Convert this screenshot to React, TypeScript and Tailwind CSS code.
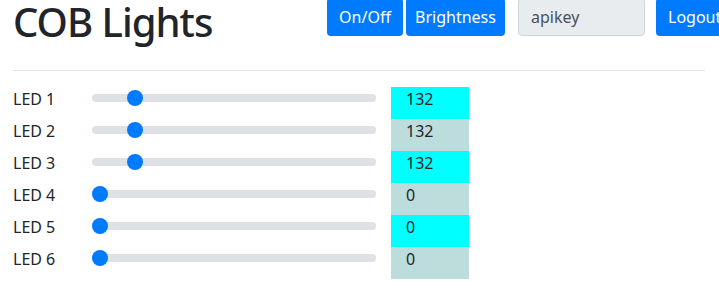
import React from 'react';

const leds = [
  { name: 'LED 1', value: 132 },
  { name: 'LED 2', value: 132 },
  { name: 'LED 3', value: 132 },
  { name: 'LED 4', value: 0 },
  { name: 'LED 5', value: 0 },
  { name: 'LED 6', value: 0 },
];

const TRACK_W = 284;
const THUMB_W = 16;
const MAX = 1023;

const Slider: React.FC<{ value: number }> = ({ value }) => (
  <div className="relative h-2 rounded-full bg-[#dee2e6]" style={{ width: TRACK_W }}>
    <div
      className="absolute top-1/2 h-4 w-4 -translate-y-1/2 rounded-full bg-[#007bff]"
      style={{ left: (value / MAX) * (TRACK_W - THUMB_W) }}
    />
  </div>
);

const App: React.FC = () => {
  return (
    <div className="h-[282px] w-[719px] overflow-hidden bg-white pl-[13px] font-['Noto_Sans',sans-serif] text-[#212529]">
      {/* Header */}
      <div className="-mt-[2px] flex items-start">
        <h1 className="w-[314px] shrink-0 whitespace-nowrap text-[40px] font-medium leading-[48px] tracking-[-1px]">
          COB Lights
        </h1>
        <button className="h-[38px] w-[76px] shrink-0 rounded bg-[#007bff] text-base text-white">On/Off</button>
        <button className="ml-[3px] h-[38px] w-[99px] shrink-0 rounded bg-[#007bff] text-base text-white">
          Brightness
        </button>
        <div className="ml-[13px] flex h-[38px] w-[127px] shrink-0 items-center rounded border border-[#ced4da] bg-[#e9ecef] px-3 text-base text-[#495057]">
          apikey
        </div>
        <button className="ml-[11px] h-[38px] w-[80px] shrink-0 rounded bg-[#007bff] pl-3 text-left text-base text-white">
          Logout
        </button>
      </div>

      <hr className="mt-[24px] mb-4 w-[692px] border-t border-[#e5e5e5]" />

      {/* LED rows */}
      <div className="flex flex-col">
        {leds.map((led, i) => (
          <div key={led.name} className="flex h-8 items-start">
            <div className="w-[79px] leading-6">{led.name}</div>
            <div className="pt-[7px]">
              <Slider value={led.value} />
            </div>
            <div
              className={
                'ml-[15px] h-8 w-[78px] pl-[15px] leading-6 ' +
                (i % 2 === 0 ? 'bg-[#00ffff]' : 'bg-[#bddcdc]')
              }
            >
              {led.value}
            </div>
          </div>
        ))}
      </div>
    </div>
  );
};

export default App;
